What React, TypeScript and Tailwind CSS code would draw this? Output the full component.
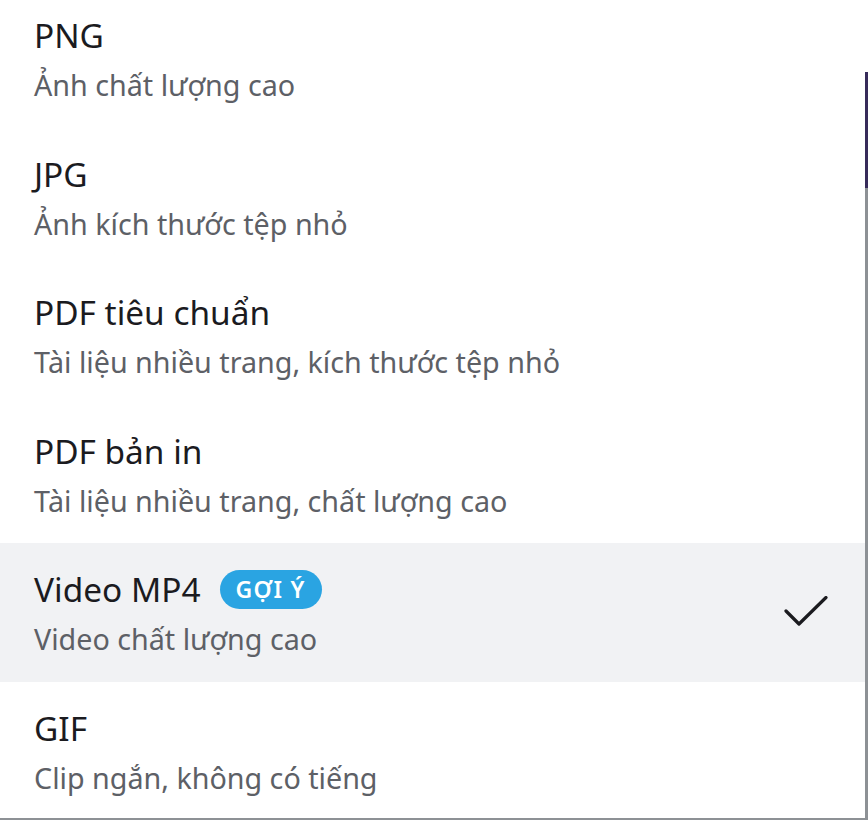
import React from "react";

type Item = { title: string; sub: string; badge?: string; selected?: boolean };

const items: Item[] = [
  { title: "PNG", sub: "Ảnh chất lượng cao" },
  { title: "JPG", sub: "Ảnh kích thước tệp nhỏ" },
  { title: "PDF tiêu chuẩn", sub: "Tài liệu nhiều trang, kích thước tệp nhỏ" },
  { title: "PDF bản in", sub: "Tài liệu nhiều trang, chất lượng cao" },
  { title: "Video MP4", sub: "Video chất lượng cao", badge: "GỢI Ý", selected: true },
  { title: "GIF", sub: "Clip ngắn, không có tiếng" },
  { title: "SVG", sub: "Tệp vector" },
];

function Check() {
  return (
    <svg width="46" height="32" viewBox="0 0 46 32" fill="none">
      <path
        d="M2 15 L15 28 L42 1.5"
        stroke="#1b1b1f"
        strokeWidth="3.2"
        strokeLinecap="round"
        strokeLinejoin="round"
      />
    </svg>
  );
}

export default function App() {
  return (
    <div
      className="relative w-[868px] h-[820px] overflow-hidden bg-white"
      style={{ fontFamily: '"Noto Sans", "Open Sans", sans-serif' }}
    >
      <div className="-mt-[11px] flex flex-col">
        {items.map((it) => (
          <div
            key={it.title}
            className={`flex h-[138.5px] shrink-0 items-center justify-between pl-[34px] pr-[38px] ${
              it.selected ? "bg-[#f1f2f4]" : "bg-white"
            }`}
          >
            <div className="flex flex-col">
              <div className="mt-[2px] flex items-center">
                <span className="text-[33.4px] leading-[40px] text-[#1b1b1f]">{it.title}</span>
                {it.badge && (
                  <span className="ml-[19px] flex h-[39px] items-center rounded-full bg-[#2aa4e2] px-[16px] text-[23px] font-semibold tracking-[1.2px] text-white">
                    {it.badge}
                  </span>
                )}
              </div>
              <span className="mt-[12px] text-[28.7px] leading-[36px] text-[#5d6066]">{it.sub}</span>
            </div>
            {it.selected && <Check />}
          </div>
        ))}
      </div>
      <div className="absolute right-0 top-[72px] h-[116px] w-[3px] bg-[#372b5a]" />
      <div className="absolute right-0 top-[188px] bottom-0 w-[3px] bg-[#8d9195]" />
      <div className="absolute left-0 right-0 bottom-0 h-[2px] bg-[#8d9195]" />
    </div>
  );
}
